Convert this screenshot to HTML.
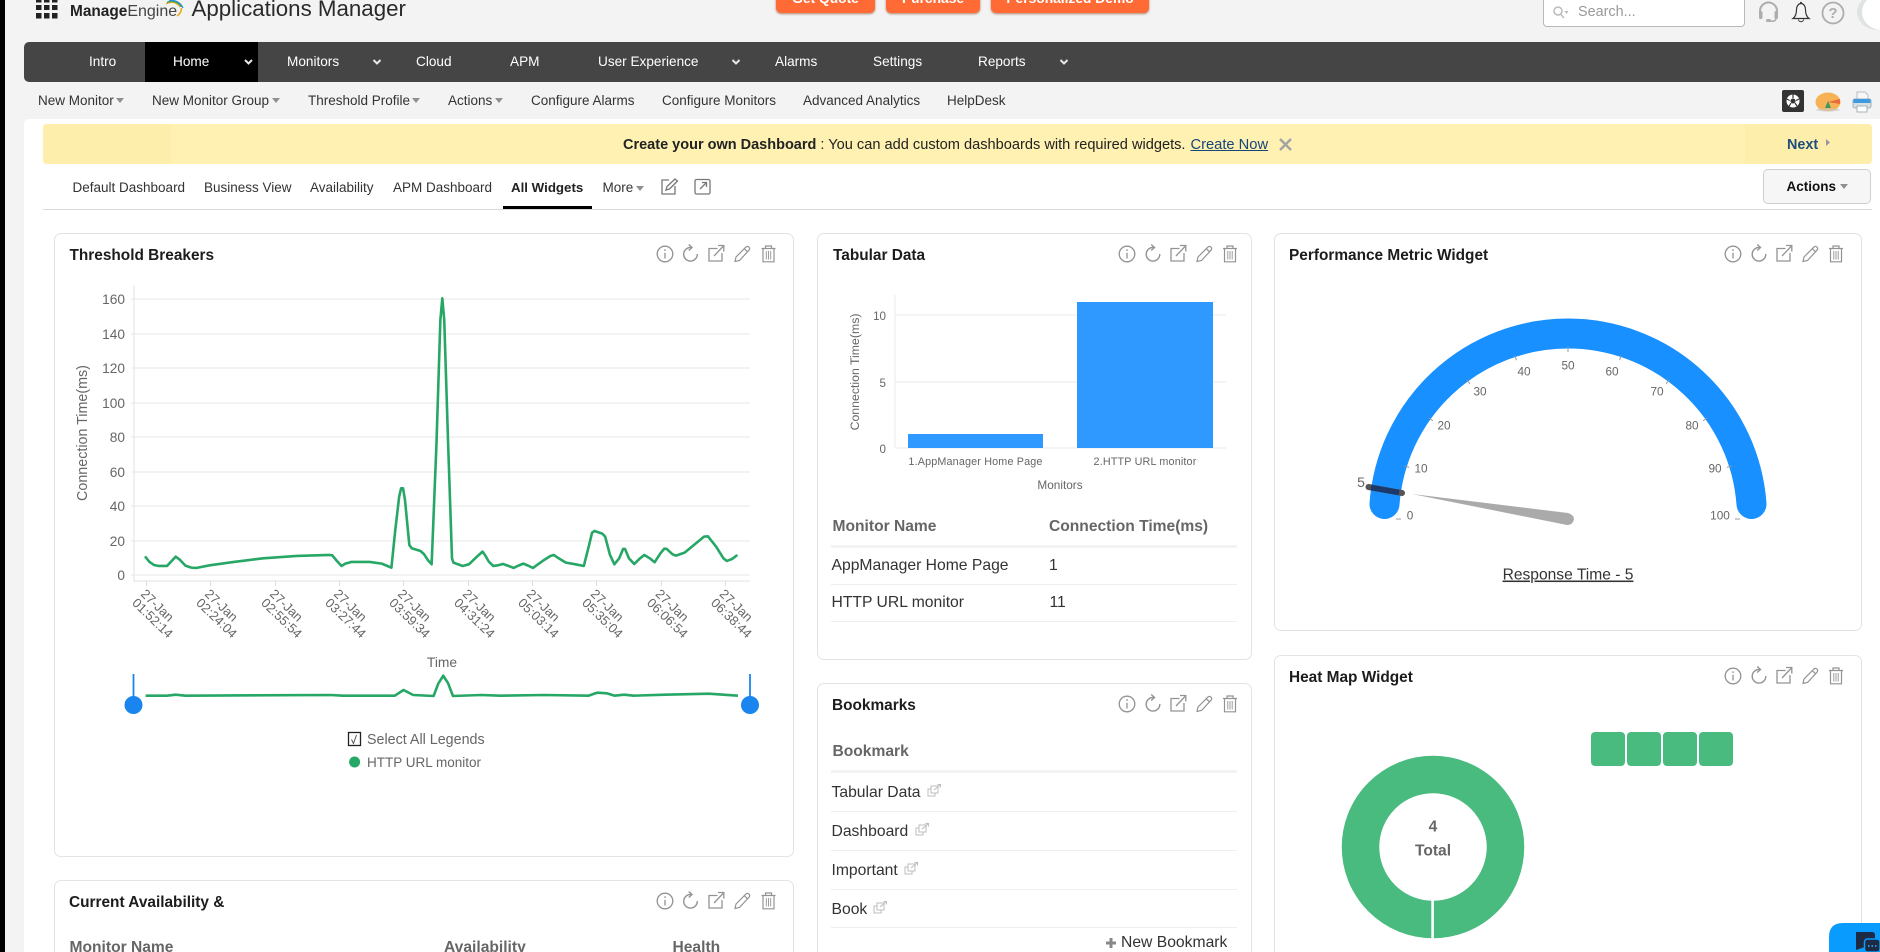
<!DOCTYPE html>
<html lang="en">
<head>
<meta charset="utf-8">
<title>Applications Manager</title>
<style>
html,body{margin:0;padding:0;width:1880px;height:952px;overflow:clip;background:#f3f3f3;font-family:"Liberation Sans",Arial,sans-serif;color:#333}
#root{position:relative;width:1880px;height:952px;overflow:clip;background:#f3f3f3}
.a{position:absolute}
.t{position:absolute;white-space:nowrap;line-height:1}
.btn{position:absolute;top:-20px;height:33px;background:#ff6a35;border-radius:5px;box-shadow:0 1px 2px rgba(120,40,0,.55);color:#fff;font-weight:bold;font-size:13.8px;text-align:center;line-height:37px}
.card{position:absolute;background:#fff;border:1px solid #e3e3e3;border-radius:7px;box-sizing:border-box}
.cut{border-bottom:none;border-radius:7px 7px 0 0}
.nav{color:#fff;font-size:13.6px;top:55px}
.sub{color:#333;font-size:13.5px;top:94px}
.tab{color:#333;font-size:13.5px;top:181px}
.title{color:#1c1c1c;font-weight:bold;font-size:15.4px}
.th{color:#666;font-weight:bold;font-size:15.6px}
.td{color:#333;font-size:15.7px}
.hl{position:absolute;background:#eee;height:1px}
.car{position:absolute;width:0;height:0;border-left:4.5px solid transparent;border-right:4.5px solid transparent;border-top:5px solid #8f8f8f}
svg text{font-family:"Liberation Sans",Arial,sans-serif}
</style>
</head>
<body>
<div id="root">
<div class="a" style="left:0;top:0;width:5px;height:952px;background:#000"></div>

<!-- header -->
<svg class="a" style="left:36px;top:0" width="24" height="20"><g fill="#222"><rect x="0" y="-3" width="5.5" height="5.5"/><rect x="8" y="-3" width="5.5" height="5.5"/><rect x="16" y="-3" width="5.5" height="5.5"/><rect x="0" y="5" width="5.5" height="5"/><rect x="8" y="5" width="5.5" height="5"/><rect x="16" y="5" width="5.5" height="5"/><rect x="0" y="13" width="5.5" height="5.5"/><rect x="8" y="13" width="5.5" height="5.5"/><rect x="16" y="13" width="5.5" height="5.5"/></g></svg>
<span class="t" style="left:70px;top:4px;font-size:15.4px;color:#222"><b>Manage</b><span style="color:#444;font-size:16px">Engine</span></span>
<svg class="a" style="left:160px;top:0" width="26" height="20" fill="none" stroke-width="1.3"><path d="M6 4A10 10 0 0 1 20 7" stroke="#e8a817"/><path d="M7 2.5A11 11 0 0 1 21.5 7" stroke="#3aa655"/><path d="M9 .8A12 12 0 0 1 23 8" stroke="#2f8fd8"/><path d="M21.5 8A10 10 0 0 1 17 16" stroke="#e8a817" stroke-width="1.6"/></svg>
<span class="t" style="left:191.5px;top:-2px;font-size:22.3px;color:#2a2a2a">Applications Manager</span>

<div class="btn" style="left:776px;width:99px">Get Quote</div>
<div class="btn" style="left:886px;width:94px">Purchase</div>
<div class="btn" style="left:991px;width:158px">Personalized Demo</div>

<div class="a" style="left:1543px;top:-6px;width:202px;height:33px;background:#fff;border:1px solid #b9b9b9;border-radius:4px;box-sizing:border-box"></div>
<svg class="a" style="left:1552px;top:5px" width="18" height="16" fill="none" stroke="#bbb" stroke-width="1.5"><circle cx="6" cy="6" r="4"/><path d="M9 9.5L12 13"/><path d="M12.5 6h4l-2 3z" fill="#bbb" stroke="none"/></svg>
<span class="t" style="left:1578px;top:5px;font-size:14.4px;color:#9a9a9a">Search...</span>

<svg class="a" style="left:1720px;top:0" width="160" height="40" fill="none">
<path d="M40 14V11a8.5 8.5 0 0 1 17 0V14" stroke="#adadad" stroke-width="2"/><rect x="39" y="11" width="3.5" height="8" rx="1.5" fill="#adadad"/><rect x="54.5" y="11" width="3.5" height="8" rx="1.5" fill="#adadad"/><path d="M56 19Q55 22 50 21" stroke="#adadad" stroke-width="1.5"/><rect x="46" y="19" width="5" height="3" rx="1.5" fill="#adadad"/>
<path d="M73 18.5Q76.500 16 76.500 9.500A4.500 6 0 0 1 85.500 9.500Q85.500 16 89 18.500Z" stroke="#333" stroke-width="1.2"/><path d="M78.500 19.500a2.500 2.200 0 0 0 5 0" stroke="#333"/><circle cx="81" cy="2.800" r="1" fill="#333"/>
<circle cx="113" cy="13" r="10.5" stroke="#adadad" stroke-width="1.8"/><text x="113" y="18" text-anchor="middle" font-size="15" font-weight="bold" fill="#adadad">?</text>
</svg>
<div class="a" style="left:1857px;top:-6px;width:40px;height:36px;border-radius:50%;background:#fff;box-shadow:inset 5px 0 0 #dfe3e2"></div>

<!-- nav -->
<div class="a" style="left:24px;top:42px;width:1856px;height:40px;background:#454545;border-radius:5px 0 0 5px"></div>
<div class="a" style="left:145px;top:42px;width:113px;height:40px;background:#000"></div>
<span class="t nav" style="left:89px">Intro</span>
<span class="t nav" style="left:173px">Home</span>
<span class="t nav" style="left:287px">Monitors</span>
<span class="t nav" style="left:416px">Cloud</span>
<span class="t nav" style="left:510px">APM</span>
<span class="t nav" style="left:598px">User Experience</span>
<span class="t nav" style="left:775px">Alarms</span>
<span class="t nav" style="left:873px">Settings</span>
<span class="t nav" style="left:978px">Reports</span>
<svg class="a" style="left:0;top:0" width="1880" height="82" fill="none" stroke="#e8e8e8" stroke-width="2"><path d="M245 60l3.5 3.5 3.5-3.5M373.5 60l3.500 3.500 3.500-3.500M732.500 60l3.500 3.500 3.500-3.500M1060.500 60l3.500 3.500 3.500-3.500"/></svg>

<!-- sub nav -->
<span class="t sub" style="left:38px">New Monitor</span><i class="car" style="left:116px;top:98px"></i>
<span class="t sub" style="left:152px">New Monitor Group</span><i class="car" style="left:272px;top:98px"></i>
<span class="t sub" style="left:308px">Threshold Profile</span><i class="car" style="left:412px;top:98px"></i>
<span class="t sub" style="left:448px">Actions</span><i class="car" style="left:495px;top:98px"></i>
<span class="t sub" style="left:531px">Configure Alarms</span>
<span class="t sub" style="left:662px">Configure Monitors</span>
<span class="t sub" style="left:803px">Advanced Analytics</span>
<span class="t sub" style="left:947px">HelpDesk</span>

<svg class="a" style="left:1780px;top:88px" width="100" height="28">
<rect x="2" y="2" width="22" height="22" rx="2" fill="#333"/><circle cx="13" cy="13" r="6.5" fill="#fff"/><circle cx="13" cy="13" r="2.5" fill="#333"/><path d="M13 6.5V10M19 11l-3 1.5M17 18l-2-3M9 18.500l2-3.500M6.700 11l3 1.500" stroke="#333" stroke-width="1.2"/>
<ellipse cx="48" cy="14" rx="12.5" ry="9.5" fill="#f7b255"/><path d="M48 14L60 11V16Z" fill="#ea6a3c"/><path d="M45 20L48 13 51 20Z" fill="#3a9a5c"/><ellipse cx="48" cy="22" rx="12" ry="1.5" fill="#c9c9c9" opacity=".7"/>
<path d="M77 12V4h8l3 3V12Z" fill="#f7f7f7" stroke="#b5bfc6" stroke-width="1"/><rect x="73" y="11" width="18" height="9" rx="2" fill="#d9e0e4" stroke="#9fb0bc"/><rect x="73.500" y="11" width="17" height="4" fill="#3f9be0"/><rect x="77" y="18" width="10" height="6" fill="#fff" stroke="#a5b0b8"/>
</svg>

<!-- main panel -->
<div class="a" style="left:24px;top:119px;width:1856px;height:833px;background:#fff;border-radius:5px 0 0 0"></div>

<!-- banner -->
<div class="a" style="left:43px;top:124px;width:1829px;height:40px;background:#fef1b1;border-radius:4px"></div>
<div class="a" style="left:43px;top:124px;width:128px;height:40px;background:#fdeeac;border-radius:4px 0 0 4px"></div>
<div class="a" style="left:1745px;top:124px;width:127px;height:40px;background:#fdeeac;border-radius:0 4px 4px 0"></div>
<span class="t" style="left:623px;top:138px;font-size:14.5px;color:#222"><b>Create your own Dashboard</b> <span style="font-size:14.6px">: You can add custom dashboards with required widgets.</span> <span style="color:#16457a;text-decoration:underline;padding-left:1px;font-size:14.7px">Create Now</span></span>
<svg class="a" style="left:1278px;top:137px" width="15" height="15" stroke="#a3a3a3" stroke-width="2.4"><path d="M2 2L13 13M13 2L2 13"/></svg>
<span class="t" style="left:1787px;top:137.500px;font-size:14.4px;font-weight:bold;color:#1d4e7c">Next</span>
<svg class="a" style="left:1825px;top:138px" width="6" height="10"><path d="M1 1L5 4.5 1 8Z" fill="#999"/></svg>

<!-- tabs -->
<span class="t tab" style="left:72.5px">Default Dashboard</span>
<span class="t tab" style="left:204px">Business View</span>
<span class="t tab" style="left:310px">Availability</span>
<span class="t tab" style="left:393px">APM Dashboard</span>
<span class="t tab" style="left:511px;font-weight:bold;color:#222;top:180.5px;font-size:13.300px">All Widgets</span>
<span class="t tab" style="left:602.5px">More</span><i class="car" style="left:636px;top:186px"></i>
<svg class="a" style="left:660px;top:177px" width="52" height="20" fill="none" stroke="#777" stroke-width="1.3"><path d="M9 3H2V17H15V9"/><path d="M6 13L7 9.5 15 2 17.5 4 9.500 12Z"/><rect x="35" y="2.5" width="15" height="14.5" rx="1.5"/><path d="M40 12L46 6M42 5.500H46.500V10"/></svg>
<div class="a" style="left:503px;top:206px;width:89px;height:2.5px;background:#000"></div>
<div class="a" style="left:43px;top:209px;width:1829px;height:1px;background:#dadada"></div>
<div class="a" style="left:1762.500px;top:169px;width:108.500px;height:35px;background:#f6f6f6;border:1px solid #cfcfcf;border-radius:5px;box-sizing:border-box"></div>
<span class="t" style="left:1786.5px;top:180px;font-size:13.5px;font-weight:bold;color:#111">Actions</span><i class="car" style="left:1840px;top:184px"></i>

<!-- cards -->
<div class="card" style="left:54px;top:233px;width:740px;height:624px"></div>
<div class="card cut" style="left:54px;top:880px;width:740px;height:72px"></div>
<div class="card" style="left:817px;top:233px;width:435px;height:427px"></div>
<div class="card cut" style="left:817px;top:683px;width:435px;height:269px"></div>
<div class="card" style="left:1274px;top:233px;width:588px;height:398px"></div>
<div class="card cut" style="left:1274px;top:655px;width:588px;height:297px"></div>

<span class="t title" style="left:69.5px;top:248px">Threshold Breakers</span>
<span class="t title" style="left:833px;top:248px">Tabular Data</span>
<span class="t title" style="left:1289px;top:248px">Performance Metric Widget</span>
<span class="t title" style="left:69px;top:895px">Current Availability &amp;</span>
<span class="t title" style="left:832px;top:698px">Bookmarks</span>
<span class="t title" style="left:1289px;top:670px">Heat Map Widget</span>

<!-- tabular table -->
<span class="t th" style="left:832.5px;top:519px">Monitor Name</span>
<span class="t th" style="left:1049px;top:519px">Connection Time(ms)</span>
<div class="a" style="left:831px;top:545px;width:406px;height:3px;background:#f3f3f3"></div>
<span class="t td" style="left:831.5px;top:558px">AppManager Home Page</span>
<span class="t td" style="left:1049px;top:558px">1</span>
<div class="hl" style="left:831px;top:584px;width:406px"></div>
<span class="t td" style="left:831.5px;top:595px">HTTP URL monitor</span>
<span class="t td" style="left:1049.500px;top:595px">11</span>
<div class="hl" style="left:831px;top:621px;width:406px"></div>

<!-- bookmarks -->
<span class="t th" style="left:832.5px;top:744px">Bookmark</span>
<div class="a" style="left:831px;top:770px;width:406px;height:3px;background:#f3f3f3"></div>
<span class="t td" style="left:831.5px;top:785px">Tabular Data</span>
<div class="hl" style="left:831px;top:811px;width:406px"></div>
<span class="t td" style="left:831.5px;top:824px">Dashboard</span>
<div class="hl" style="left:831px;top:850px;width:406px"></div>
<span class="t td" style="left:831.5px;top:863px">Important</span>
<div class="hl" style="left:831px;top:889px;width:406px"></div>
<span class="t td" style="left:831.5px;top:902px">Book</span>
<div class="hl" style="left:831px;top:927px;width:406px"></div>
<span class="t td" style="left:1121px;top:935px">New Bookmark</span>

<!-- availability -->
<span class="t th" style="left:69.5px;top:940px">Monitor Name</span>
<span class="t th" style="left:444px;top:940px">Availability</span>
<span class="t th" style="left:672.5px;top:940px">Health</span>

<!-- heat map -->
<div class="a" style="left:1591px;top:732px;width:34px;height:34px;background:#4abb7f;border-radius:4px"></div>
<div class="a" style="left:1627px;top:732px;width:34px;height:34px;background:#4abb7f;border-radius:4px"></div>
<div class="a" style="left:1663px;top:732px;width:34px;height:34px;background:#4abb7f;border-radius:4px"></div>
<div class="a" style="left:1699px;top:732px;width:34px;height:34px;background:#4abb7f;border-radius:4px"></div>

<!-- graphics layer -->
<svg class="a" style="left:0;top:0" width="1880" height="952" viewBox="0 0 1880 952">
<defs>
<g id="ic-info" fill="none" stroke="#939393" stroke-width="1.3"><circle r="7.8"/><path d="M0-1.2V4.5M0-4.800V-3"/></g>
<g id="ic-ref" fill="none" stroke="#939393" stroke-width="1.4"><path d="M.8-6.5A6.8 6.8 0 1 0 6.8 0"/><path d="M-1.800-9.500L1.500-6.500-1.800-3.500"/></g>
<g id="ic-ext" fill="none" stroke="#939393" stroke-width="1.3"><path d="M1.5-5.500H-7V7H6V-1"/><path d="M-2 2L7-7.500M2-8.500H7.800V-2.500"/></g>
<g id="ic-pen" fill="none" stroke="#939393" stroke-width="1.2"><path d="M-7 7.500L-6 3 4-7Q5.500-8.300 7-6.800 8.300-5.300 7-3.800L-2.500 6.500Z"/><path d="M2.300-5.300L5.500-2.200"/></g>
<g id="ic-del" fill="none" stroke="#939393" stroke-width="1.2"><path d="M-7-5.500H7M-3-5.500V-8H3V-5.500M-5.500-5.500V7.800H5.500V-5.500"/><path d="M-2.200-3V5.500M0-3V5.500M2.200-3V5.500" stroke-width=".9"/></g>
<g id="ic-lnk" fill="none" stroke="#bdbdbd" stroke-width="1"><rect x="-6" y="-2" width="7" height="7"/><rect x="-3" y="-5" width="7" height="7" fill="#fff"/><path d="M0-1L6-6M3.500-6.500H6.500V-3.500"/></g>
</defs>

<!-- widget icons -->
<use href="#ic-info" x="665" y="254"/><use href="#ic-ref" x="690.5" y="254"/><use href="#ic-ext" x="716" y="254"/><use href="#ic-pen" x="742" y="254"/><use href="#ic-del" x="768.5" y="254"/>
<use href="#ic-info" x="665" y="901"/><use href="#ic-ref" x="690.5" y="901"/><use href="#ic-ext" x="716" y="901"/><use href="#ic-pen" x="742" y="901"/><use href="#ic-del" x="768.5" y="901"/>
<use href="#ic-info" x="1127" y="254"/><use href="#ic-ref" x="1153" y="254"/><use href="#ic-ext" x="1178" y="254"/><use href="#ic-pen" x="1204" y="254"/><use href="#ic-del" x="1230" y="254"/>
<use href="#ic-info" x="1127" y="704"/><use href="#ic-ref" x="1153" y="704"/><use href="#ic-ext" x="1178" y="704"/><use href="#ic-pen" x="1204" y="704"/><use href="#ic-del" x="1230" y="704"/>
<use href="#ic-info" x="1733" y="254"/><use href="#ic-ref" x="1759" y="254"/><use href="#ic-ext" x="1784" y="254"/><use href="#ic-pen" x="1810" y="254"/><use href="#ic-del" x="1836" y="254"/>
<use href="#ic-info" x="1733" y="676"/><use href="#ic-ref" x="1759" y="676"/><use href="#ic-ext" x="1784" y="676"/><use href="#ic-pen" x="1810" y="676"/><use href="#ic-del" x="1836" y="676"/>

<use href="#ic-lnk" x="934" y="791"/><use href="#ic-lnk" x="922" y="830"/><use href="#ic-lnk" x="911" y="869"/><use href="#ic-lnk" x="880" y="908"/>
<path d="M1111 938V948M1106 943H1116" stroke="#888" stroke-width="3"/>

<!-- line chart -->
<g stroke="#ececec" stroke-width="1.2">
<path d="M131 299H750M131 334H750M131 368H750M131 403H750M131 437H750M131 472H750M131 506H750M131 541H750M131 575H750"/>
</g>
<path d="M134 285V581H750" fill="none" stroke="#e6e6e6" stroke-width="1.2"/>
<path d="M146.6 581v5M210.6 581v5M275.6 581v5M339.6 581v5M403.6 581v5M468.5 581v5M532.5 581v5M596.5 581v5M661.4 581v5M725.4 581v5" stroke="#ddd"/>
<g fill="#666" font-size="13.7" text-anchor="end">
<text x="125" y="304">160</text><text x="125" y="339">140</text><text x="125" y="373">120</text><text x="125" y="408">100</text><text x="125" y="442">80</text><text x="125" y="477">60</text><text x="125" y="511">40</text><text x="125" y="546">20</text><text x="125" y="580">0</text>
</g>
<text transform="translate(87 433) rotate(-90)" text-anchor="middle" font-size="14.3" fill="#666">Connection Time(ms)</text>
<g transform="translate(40 230) scale(.4847 .3333)">
<path vector-effect="non-scaling-stroke" fill="none" stroke="#27a766" stroke-width="2.6" stroke-linejoin="round" stroke-linecap="round" d="M218 982L226 996 235 1005 245 1008 262 1008 271 994 280 980 289 990 300 1007 312 1013 322 1014 350 1006 400 996 460 985 530 978 597 975 603 976 612 992 622 1008 630 1001 642 996 680 996 705 1001 725 1013 733 900 741 800 745 775 749 775 753 810 762 945 767 955 785 963 792 972 800 990 808 1003 818 640 826 270 830 205 834 270 842 640 850 985 853 998 872 1008 885 1003 900 982 913 965 918 975 926 995 935 1008 945 1006 955 1002 965 1007 977 1014 987 1007 997 1001 1007 1007 1017 1014 1040 990 1053 978 1060 975 1070 985 1085 998 1105 1003 1122 1008 1132 950 1139 908 1144 903 1160 911 1166 920 1176 975 1185 1003 1195 985 1203 957 1207 957 1215 985 1226 1002 1238 985 1247 975 1258 985 1268 997 1280 970 1288 956 1293 957 1305 973 1312 977 1330 968 1355 938 1370 920 1378 919 1395 950 1410 985 1417 993 1428 987 1437 977"/>
</g>
<g fill="#666" font-size="13">
<g transform="translate(140 594.8) rotate(44)"><text>27-Jan</text><text y="12.5">01:52:14</text></g>
<g transform="translate(204 594.8) rotate(44)"><text>27-Jan</text><text y="12.5">02:24:04</text></g>
<g transform="translate(269 594.8) rotate(44)"><text>27-Jan</text><text y="12.5">02:55:54</text></g>
<g transform="translate(333 594.8) rotate(44)"><text>27-Jan</text><text y="12.5">03:27:44</text></g>
<g transform="translate(397 594.8) rotate(44)"><text>27-Jan</text><text y="12.5">03:59:34</text></g>
<g transform="translate(461.900 594.8) rotate(44)"><text>27-Jan</text><text y="12.5">04:31:24</text></g>
<g transform="translate(525.900 594.8) rotate(44)"><text>27-Jan</text><text y="12.5">05:03:14</text></g>
<g transform="translate(589.900 594.8) rotate(44)"><text>27-Jan</text><text y="12.5">05:35:04</text></g>
<g transform="translate(654.800 594.8) rotate(44)"><text>27-Jan</text><text y="12.5">06:06:54</text></g>
<g transform="translate(718.800 594.8) rotate(44)"><text>27-Jan</text><text y="12.5">06:38:44</text></g>
</g>
<text x="442" y="667" text-anchor="middle" font-size="13.8" fill="#666">Time</text>

<!-- slider -->
<path d="M133.5 674V705M750 674V705" stroke="#1a85ee" stroke-width="1.8"/>
<circle cx="133.5" cy="705" r="9" fill="#1a85ee"/><circle cx="750" cy="705" r="9" fill="#1a85ee"/>
<g transform="translate(40 650) scale(.4847 .3333)">
<path vector-effect="non-scaling-stroke" fill="none" stroke="#27a766" stroke-width="2.6" stroke-linejoin="round" d="M218 137L262 137 280 134 300 137 600 135 625 137 732 137 750 120 770 135 812 138 822 100 832 77 842 100 852 138 910 135 950 137 1040 135 1132 137 1150 128 1170 130 1185 137 1205 134 1225 137 1290 134 1380 131 1440 137"/>
</g>

<!-- legend -->
<rect x="348.5" y="732.5" width="12" height="13" fill="#fff" stroke="#222" stroke-width="1.3"/>
<path d="M351.5 739.5L353.5 743.5 356.5 735" fill="none" stroke="#555" stroke-width="1"/>
<text x="367" y="744" font-size="14.3" fill="#666">Select All Legends</text>
<circle cx="354.6" cy="762" r="5.5" fill="#27a766"/>
<text x="367" y="767" font-size="13.5" fill="#666">HTTP URL monitor</text>

<!-- bar chart -->
<path d="M895 315H1226M895 382H1226M895 448H1226" stroke="#eee" stroke-width="1.2"/>
<path d="M895 295V448" stroke="#eee" stroke-width="1.2"/>
<rect x="908" y="434" width="135" height="14" fill="#3099ff"/>
<rect x="1077" y="302" width="136" height="146" fill="#3099ff"/>
<g fill="#666" font-size="11.6" text-anchor="end"><text x="886" y="320">10</text><text x="886" y="387">5</text><text x="886" y="453">0</text></g>
<text transform="translate(859 372) rotate(-90)" text-anchor="middle" font-size="12.3" fill="#666">Connection Time(ms)</text>
<g fill="#666" font-size="10.8" text-anchor="middle" letter-spacing=".15"><text x="975.5" y="465">1.AppManager Home Page</text><text x="1145" y="465">2.HTTP URL monitor</text></g>
<text x="1060" y="489" text-anchor="middle" font-size="11.8" fill="#666">Monitors</text>

<!-- gauge -->
<path d="M1384.5 504A184 184 0 0 1 1751.5 504" fill="none" stroke="#1890ff" stroke-width="30" stroke-linecap="round"/>
<g transform="translate(1568 519)" stroke="#999" stroke-width="1">
<line x1="-172" x2="-167" transform="rotate(0)"/><line x1="-172" x2="-167" transform="rotate(18)"/><line x1="-172" x2="-167" transform="rotate(36)"/><line x1="-172" x2="-167" transform="rotate(54)"/><line x1="-172" x2="-167" transform="rotate(72)"/><line x1="-172" x2="-167" transform="rotate(90)"/><line x1="-172" x2="-167" transform="rotate(108)"/><line x1="-172" x2="-167" transform="rotate(126)"/><line x1="-172" x2="-167" transform="rotate(144)"/><line x1="-172" x2="-167" transform="rotate(162)"/><line x1="-172" x2="-167" transform="rotate(180)"/>
</g>
<g fill="#666" font-size="11.8" text-anchor="middle">
<text x="1410" y="519.5">0</text><text x="1421" y="472.5">10</text><text x="1444" y="429.5">20</text><text x="1480" y="395.5">30</text><text x="1524" y="375.5">40</text><text x="1568" y="369.5">50</text><text x="1612" y="375.5">60</text><text x="1657" y="395.5">70</text><text x="1692" y="429.5">80</text><text x="1715" y="472.5">90</text><text x="1720" y="519.5">100</text>
</g>
<path d="M1368.5 487L1402 493" stroke="#555" stroke-width="6" stroke-linecap="round"/>
<path d="M1371 487.5L1399 492.500" stroke="#1b3a6c" stroke-width="5.5"/>
<text x="1361" y="487" text-anchor="middle" font-size="14" fill="#666">5</text>
<path d="M1412 494L1568 513 Q1574 515 1574 519 Q1573 525 1567 525Z" fill="#aaa"/>
<text x="1568" y="579.5" text-anchor="middle" font-size="15.6" fill="#333" text-decoration="underline">Response Time - 5</text>

<!-- donut -->
<circle cx="1433" cy="847" r="72.5" fill="none" stroke="#4abb7f" stroke-width="37.5"/>
<rect x="1431.3" y="897" width="2.6" height="44" fill="#fff"/>
<text x="1433" y="831.5" text-anchor="middle" font-size="15.6" font-weight="bold" fill="#666">4</text>
<text x="1433" y="855.5" text-anchor="middle" font-size="15.6" font-weight="bold" fill="#666">Total</text>

<!-- chat -->
<path d="M1829 952V937Q1829 923 1843 923H1880V952Z" fill="#0a9bff"/>
<path d="M1856 932H1872Q1875 932 1875 935V941H1865V947L1856 950Z" fill="#1c2a44"/>
<rect x="1864.5" y="939" width="15.5" height="13" rx="3" fill="#1c2a44" stroke="#0a9bff" stroke-width="1.5"/>
<path d="M1868 946h1.5M1871.5 946H1873M1875 946h1.5" stroke="#3db2ff" stroke-width="1.5"/>
</svg>
</div>
</body>
</html>
